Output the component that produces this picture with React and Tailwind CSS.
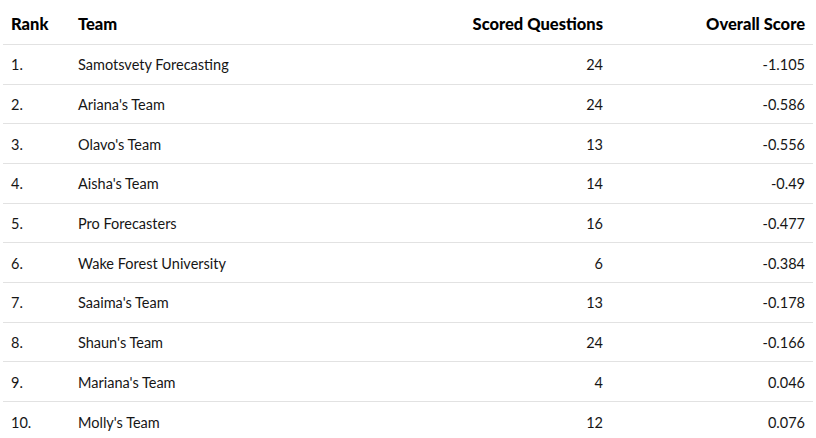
const rows = [
  ["1.", "Samotsvety Forecasting", 24, "-1.105"],
  ["2.", "Ariana's Team", 24, "-0.586"],
  ["3.", "Olavo's Team", 13, "-0.556"],
  ["4.", "Aisha's Team", 14, "-0.49"],
  ["5.", "Pro Forecasters", 16, "-0.477"],
  ["6.", "Wake Forest University", 6, "-0.384"],
  ["7.", "Saaima's Team", 13, "-0.178"],
  ["8.", "Shaun's Team", 24, "-0.166"],
  ["9.", "Mariana's Team", 4, "0.046"],
  ["10.", "Molly's Team", 12, "0.076"],
];

export default function App() {
  return (
    <div className="w-[816px] h-[438px] overflow-hidden bg-white pl-[3px] pr-[3px] font-['Lato',sans-serif] text-[#161616]">
      <div className="flex h-[45px] items-center pt-[5px] border-b border-[#e2e2e2] text-[16.5px] font-black text-black">
        <div className="w-[67px] pl-2">Rank</div>
        <div className="flex-1 pl-2">Team</div>
        <div className="w-[200px] pr-2 text-right">Scored Questions</div>
        <div className="w-[202px] pr-2 text-right">Overall Score</div>
      </div>
      {rows.map(([rank, team, scored, score], i) => (
        <div
          key={rank}
          className={
            "flex h-[39.67px] items-center pt-[2px] text-[14.5px] " +
            (i < rows.length - 1 ? "border-b border-[#e2e2e2]" : "")
          }
        >
          <div className="w-[67px] pl-2">{rank}</div>
          <div className="flex-1 pl-2">{team}</div>
          <div className="w-[200px] pr-2 text-right">{scored}</div>
          <div className="w-[202px] pr-2 text-right">{score}</div>
        </div>
      ))}
    </div>
  );
}
